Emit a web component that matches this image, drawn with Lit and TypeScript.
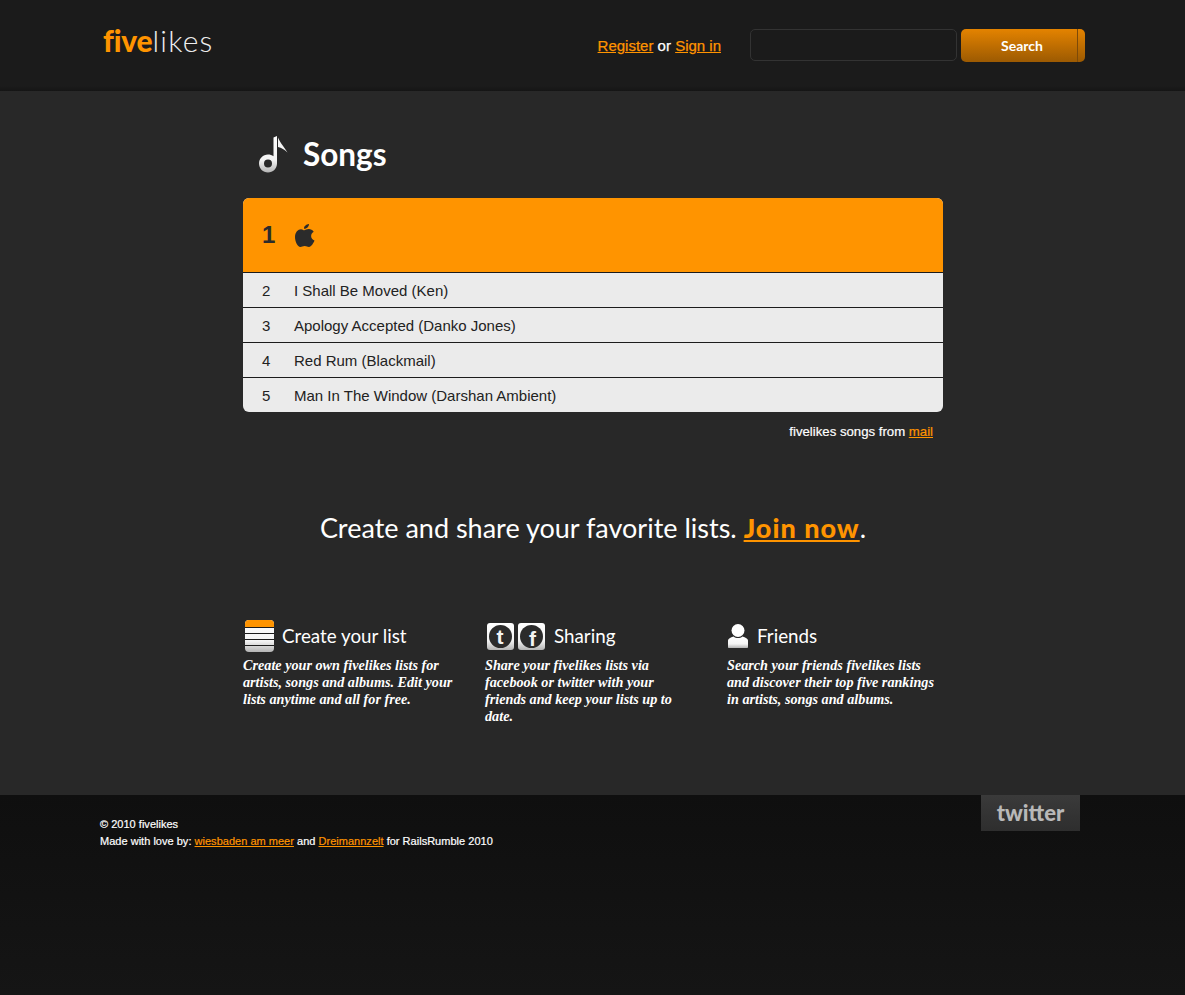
import { LitElement, css, html, svg } from "lit";
import { customElement } from "lit/decorators.js";

const songs = [
  "I Shall Be Moved (Ken)",
  "Apology Accepted (Danko Jones)",
  "Red Rum (Blackmail)",
  "Man In The Window (Darshan Ambient)",
];

const defs = svg`
  <linearGradient id="shine" x1="0" y1="0" x2="0" y2="1">
    <stop offset="0" stop-color="#ffffff" />
    <stop offset="0.65" stop-color="#f4f4f4" />
    <stop offset="1" stop-color="#b4b4b4" />
  </linearGradient>
`;

const noteIcon = html`<svg class="note" width="30" height="37" viewBox="0 0 30 37">
  <defs>${defs}</defs>
  <path
    fill="url(#shine)"
    fill-rule="evenodd"
    d="M15.500 1.500 19 0v27.500C19 32.500 15 36.500 10 36.500S1 32.500 1 27.500 5 18.500 10 18.500c2 0 4 .6 5.500 1.800zM10 23.500a4 4 0 1 0 0 8 4 4 0 0 0 0-8z"
  />
  <path fill="#f4f4f4" d="M20 1.500c1.500 4 5 8 9.500 15-3-3-6-4.500-9.500-5.500z" />
</svg>`;

const appleIcon = html`<svg width="20" height="23" viewBox="0 0 20 23">
  <path
    fill="#2b2b2b"
    d="M14 0c.2 2-1.800 5-5 4.800C8.800 2.500 11 .300 14 0zM9.200 6.300c1 0 2.500-1.200 4.600-1.200 1.800 0 3.900 1 4.900 2.700-3.700 2-3.300 7.300.8 8.800-.9 2.500-3.300 6.400-5.500 6.400-1.700 0-2.200-1-4.300-1s-2.700 1-4.300 1C2.600 23 0 17.500 0 13c0-5 3.100-7.700 6-7.800 1.300 0 2.500 1.100 3.200 1.100z"
  />
</svg>`;

const listIcon = html`<svg width="29" height="32" viewBox="0 0 29 32">
  <defs>${defs}</defs>
  <rect width="29" height="32" rx="4" fill="url(#shine)" />
  <path fill="#ff9400" d="M0 7V4a4 4 0 0 1 4-4h21a4 4 0 0 1 4 4v3z" />
  <path fill="#1c1c1c" d="M0 7h29v1H0zM0 13h29v1H0zM0 19h29v1H0zM0 25h29v1H0z" />
</svg>`;

const socialIcon = (letter: string, x: number, y: number) =>
  html`<svg width="27" height="27" viewBox="0 0 27 27">
    <defs>${defs}</defs>
    <rect width="27" height="27" rx="3" fill="url(#shine)" />
    <circle cx="13.500" cy="13.500" r="11.500" fill="#2b2b2b" />
    <text class="glyph" x=${x} y=${y} text-anchor="middle">${letter}</text>
  </svg>`;

const personIcon = html`<svg width="20" height="24" viewBox="0 0 20 24">
  <defs>${defs}</defs>
  <circle cx="10" cy="6.500" r="6.500" fill="#fff" />
  <path
    fill="url(#shine)"
    d="M0 23v-6.500c0-2 2.500-3 5.500-4 1.300 1 2.800 1.500 4.500 1.500s3.200-.5 4.500-1.500c3 1 5.500 2 5.500 4V23c0 .6-.4 1-1 1H1c-.6 0-1-.4-1-1z"
  />
</svg>`;

@customElement("app-root")
export class AppRoot extends LitElement {
  static styles = css`
    :host {
      display: block;
      min-height: 995px;
      font-family: "Liberation Sans", Arial, sans-serif;
      color: #fff;
      background: #121212;
    }

    a {
      color: #ff9400;
    }

    .header {
      box-sizing: border-box;
      height: 91px;
      padding: 29px 100px 0 103px;
      display: flex;
      justify-content: space-between;
      background: linear-gradient(#1b1b1b 0, #1b1b1b 86px, #151515 91px);
    }

    .logo {
      font-family: Lato, sans-serif;
      font-size: 30px;
      line-height: 23px;
      letter-spacing: 1.200px;
      font-variant-ligatures: none;
      color: #eee;
      font-weight: 300;
    }

    .logo b {
      color: #ff9400;
      font-weight: 900;
      letter-spacing: -0.200px;
    }

    .tools {
      display: flex;
      align-items: flex-start;
    }

    .auth {
      font-size: 15px;
      line-height: 17px;
      padding-top: 8px;
      margin-right: 29px;
      -webkit-text-stroke: 0.25px currentColor;
    }

    .search {
      box-sizing: border-box;
      width: 207px;
      height: 32px;
      margin-right: 4px;
      background: #1b1b1b;
      border: 1px solid #333;
      border-radius: 5px;
    }

    .button {
      box-sizing: border-box;
      width: 124px;
      height: 33px;
      padding: 0 2px 0 0;
      border: 0;
      border-radius: 5px;
      background:
        linear-gradient(#7d4a08, #7d4a08) 116px 0 / 1px 100% no-repeat,
        linear-gradient(#e48300, #9c5a02);
      color: #fff;
      font: 700 14px Lato, sans-serif;
    }

    .main {
      box-sizing: border-box;
      height: 704px;
      padding-top: 45px;
      background-color: #282828;
    }

    .content {
      width: 700px;
      margin: 0 auto 0 243px;
    }

    .title {
      display: flex;
      align-items: center;
      gap: 15px;
      height: 37px;
      padding-left: 15px;
      margin-bottom: 25px;
    }

    h1 {
      margin: 0;
      font: 700 31.500px/37px Lato, sans-serif;
    }

    .panel {
      border-radius: 6px;
      overflow: hidden;
      background: #ebebeb;
      color: #222;
      font-size: 15px;
    }

    .row {
      display: flex;
      align-items: center;
      box-sizing: border-box;
      height: 35px;
      padding-top: 1px;
      border-top: 1px solid #1c1c1c;
    }

    .row .num {
      width: 51px;
      padding-left: 19px;
      box-sizing: border-box;
    }

    .top {
      display: flex;
      align-items: center;
      height: 74px;
      background: #ff9400;
    }

    .top .num {
      width: 52px;
      padding: 0 0 0 19px;
      box-sizing: border-box;
      font-size: 24px;
      font-weight: 700;
      color: #2b2b2b;
    }

    .source {
      margin: 12px 10px 0 0;
      text-align: right;
      font-size: 13.200px;
      line-height: 15px;
      -webkit-text-stroke: 0.2px currentColor;
    }

    .cta {
      margin: 72px 0 0;
      text-align: center;
      font: 400 27px/34px Lato, sans-serif;
    }

    .cta a {
      font-weight: 900;
      letter-spacing: 1px;
    }

    .features {
      display: grid;
      grid-template-columns: repeat(3, 242px);
      margin-top: 74px;
    }

    .feature h2 {
      display: flex;
      align-items: center;
      height: 34px;
      margin: 0 0 4px;
      font: 400 18.800px/34px Lato, sans-serif;
    }

    .feature p {
      margin: 0;
      font: italic 700 14.200px/17px "Liberation Serif", serif;
    }

    .create h2 svg {
      margin: 0 8px 0 2px;
    }

    .sharing h2 svg {
      margin-left: 2px;
    }

    .sharing h2 svg + svg {
      margin: 0 9px 0 4px;
    }

    .friends h2 svg {
      margin: 0 9px 0 1px;
    }

    .glyph {
      font: 700 21px "Liberation Sans", sans-serif;
      fill: #f4f4f4;
    }

    .footer {
      display: flex;
      justify-content: space-between;
      align-items: flex-start;
      box-sizing: border-box;
      height: 200px;
      padding: 0 105px 0 100px;
      background: linear-gradient(#0f0f0f, #151515);
      font-size: 11px;
      line-height: 17px;
    }

    .credits {
      padding-top: 21px;
      letter-spacing: 0.02px;
      -webkit-text-stroke: 0.2px currentColor;
    }

    .badge {
      width: 99px;
      height: 36px;
      text-align: center;
      background: linear-gradient(#3a3a3a, #2e2e2e);
      color: #b8b8b8;
      font: 900 22px/35px Lato, sans-serif;
    }
  `;

  render() {
    return html`
      <div class="header">
        <div class="logo"><b>five</b>likes</div>
        <div class="tools">
          <div class="auth"><a href="#">Register</a> or <a href="#">Sign in</a></div>
          <div class="search"></div>
          <button class="button" type="button">Search</button>
        </div>
      </div>
      <div class="main">
        <div class="content">
          <div class="title">${noteIcon}<h1>Songs</h1></div>
          <div class="panel">
            <div class="top"><span class="num">1</span>${appleIcon}</div>
            ${songs.map(
              (song, i) => html`
                <div class="row"><span class="num">${i + 2}</span>${song}</div>
              `
            )}
          </div>
          <div class="source">fivelikes songs from <a href="#">mail</a></div>
          <p class="cta">Create and share your favorite lists. <a href="#">Join now</a>.</p>
          <div class="features">
            <div class="feature create">
              <h2>${listIcon}Create your list</h2>
              <p>Create your own fivelikes lists for<br />artists, songs and albums. Edit your<br />lists anytime and all for free.</p>
            </div>
            <div class="feature sharing">
              <h2>${socialIcon("t", 13, 21)}${socialIcon("f", 14.5, 23)}Sharing</h2>
              <p>Share your fivelikes lists via<br />facebook or twitter with your<br />friends and keep your lists up to<br />date.</p>
            </div>
            <div class="feature friends">
              <h2>${personIcon}Friends</h2>
              <p>Search your friends fivelikes lists<br />and discover their top five rankings<br />in artists, songs and albums.</p>
            </div>
          </div>
        </div>
      </div>
      <div class="footer">
        <div class="credits">
          © 2010 fivelikes<br />
          Made with love by: <a href="#">wiesbaden am meer</a> and
          <a href="#">Dreimannzelt</a> for RailsRumble 2010
        </div>
        <div class="badge">twitter</div>
      </div>
    `;
  }
}
